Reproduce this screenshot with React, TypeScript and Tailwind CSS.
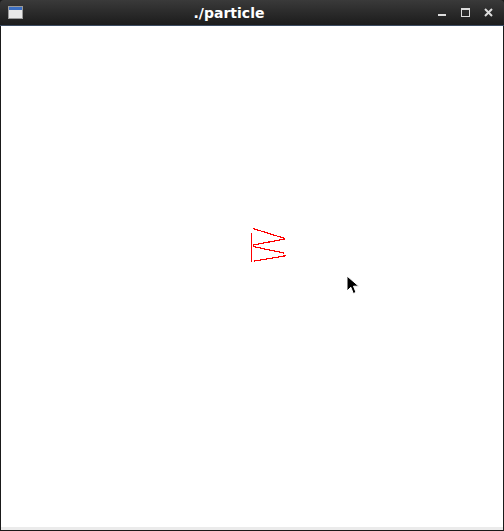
import React from "react";

const WindowIcon = () => (
  <svg width="15" height="13" viewBox="0 0 15 13">
    <rect x="0.5" y="0.5" width="14" height="12" fill="#e8e8e8" stroke="#9a9a9a" />
    <rect x="1" y="1" width="13" height="3" fill="#3b6fc4" />
  </svg>
);

const Controls = () => (
  <div className="flex items-center gap-[14px] pr-[11px]">
    <svg width="9" height="9" viewBox="0 0 9 9">
      <rect x="0" y="6" width="8" height="2" fill="#dcdcdc" />
    </svg>
    <svg width="9" height="9" viewBox="0 0 9 9">
      <rect x="0.5" y="0.5" width="8" height="8" fill="none" stroke="#dcdcdc" />
      <rect x="0.5" y="0.5" width="8" height="1.5" fill="#dcdcdc" />
    </svg>
    <svg width="9" height="9" viewBox="0 0 9 9">
      <path d="M1 1 L8 8 M8 1 L1 8" stroke="#dcdcdc" strokeWidth="2" />
    </svg>
  </div>
);

// particle as drawn by the program
const Particle = () => (
  <svg className="absolute left-0 top-0" width="504" height="505" viewBox="0 26 504 505">
    <g stroke="#ff0000" strokeWidth="1.2" fill="none" shapeRendering="crispEdges">
      <line x1="250.5" y1="233" x2="250.5" y2="262" />
      <line x1="252" y1="228.5" x2="284" y2="238.5" />
      <line x1="284" y1="239" x2="252" y2="245" />
      <line x1="252" y1="246.5" x2="283" y2="253" />
      <line x1="282" y1="255.5" x2="285" y2="255.5" />
      <line x1="284" y1="256" x2="253" y2="261" />
    </g>
  </svg>
);

const Cursor = () => (
  <svg className="absolute left-[345px] top-[249px]" width="15" height="21" viewBox="0 0 15 21">
    <path
      d="M1 1 L1 16 L4.8 12.2 L7.3 18.5 L10 17.4 L7.5 11.2 L12.8 11.2 Z"
      fill="#000"
      stroke="#fff"
      strokeWidth="1"
      strokeLinejoin="round"
    />
  </svg>
);

export default function App() {
  return (
    <div className="w-[504px] h-[531px] flex flex-col bg-[#1a1a1a] font-['DejaVu_Sans',sans-serif]">
      {/* title bar */}
      <div className="h-[26px] flex items-center rounded-t-[4px] bg-gradient-to-b from-[#3a3a3a] to-[#1c1c1c] border-b border-[#3c4c62]">
        <div className="pl-[8px] pr-[6px] flex items-center">
          <WindowIcon />
        </div>
        <div className="flex-1 text-center text-white font-bold text-[14px] leading-none pr-[9px]">
          ./particle
        </div>
        <Controls />
      </div>

      {/* drawing area */}
      <div className="flex-1 relative mx-[1px] mb-[1px] bg-white border-b-[3px] border-[#ebebeb]">
        <Particle />
        <Cursor />
      </div>
    </div>
  );
}
